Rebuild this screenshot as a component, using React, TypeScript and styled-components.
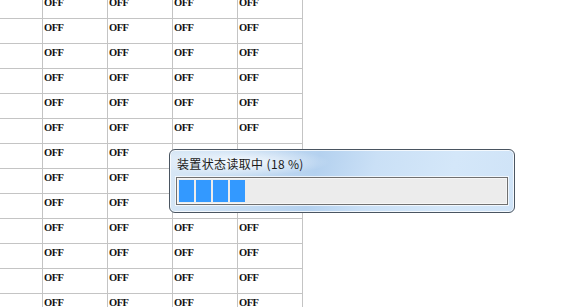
import React from "react";
import styled, { createGlobalStyle } from "styled-components";

const Global = createGlobalStyle`
  html, body { margin: 0; padding: 0; background: #ffffff; overflow: hidden; }
  body { width: 561px; height: 307px; position: relative; }
`;

const Page = styled.div`
  position: relative;
  width: 561px;
  height: 307px;
  overflow: hidden;
  background: #ffffff;
`;

const Grid = styled.div`
  display: grid;
  grid-template-columns: 43px repeat(4, 65px);
  grid-auto-rows: 25px;
  margin-top: -6px;
  width: 303px;
`;

const Cell = styled.div`
  box-sizing: border-box;
  border-right: 1px solid #c4c4c4;
  border-bottom: 1px solid #c4c4c4;
  padding: 3px 0 0 1px;
  font-family: "Liberation Serif", "DejaVu Serif", serif;
  font-size: 10.5px;
  font-weight: bold;
  letter-spacing: -0.5px;
  line-height: 12px;
  color: #111;
  white-space: nowrap;
  overflow: hidden;
`;

const Dialog = styled.div`
  position: absolute;
  left: 169px;
  top: 149px;
  width: 346px;
  height: 64px;
  box-sizing: border-box;
  border: 1px solid #4a5561;
  border-radius: 6px;
  padding: 5px 6px 6px 6px;
  display: flex;
  flex-direction: column;
  background:
    radial-gradient(ellipse 90px 14px at 70px 12px, rgba(255,255,255,0.85), rgba(255,255,255,0) 100%),
    linear-gradient(105deg, #d9e8f6 0%, #c4dbf2 25%, #b4d1ef 42%, #cae0f6 58%, #d4e7f9 80%, #cfe3f7 100%);
  box-shadow: inset 0 0 0 1px rgba(255,255,255,0.75);
`;

const Title = styled.div`
  font-family: "Noto Sans CJK SC", "Noto Sans", sans-serif;
  font-size: 12px;
  letter-spacing: 0.35px;
  line-height: 16px;
  color: #1a1a1a;
  padding-left: 1px;
  padding-top: 1px;
  height: 16px;
`;

const Bar = styled.div`
  margin-top: 5px;
  height: 28px;
  box-sizing: border-box;
  border: 1px solid #707070;
  background: #ececec;
  box-shadow: 0 0 0 1px rgba(255,255,255,0.7), inset 0 0 0 1px #f6f6f6;
  padding: 2px 2px;
  display: flex;
  gap: 2px;
`;

const Block = styled.div`
  width: 15px;
  height: 22px;
  background: #3399ff;
`;

const rows = 13;

export default function App() {
  const cells: React.ReactNode[] = [];
  for (let r = 0; r < rows; r++) {
    cells.push(<Cell key={`${r}-0`} />);
    for (let c = 1; c < 5; c++) {
      cells.push(<Cell key={`${r}-${c}`}>OFF</Cell>);
    }
  }
  return (
    <Page>
      <Global />
      <Grid>{cells}</Grid>
      <Dialog>
        <Title>装置状态读取中 (18 %)</Title>
        <Bar>
          {[0, 1, 2, 3].map((i) => (
            <Block key={i} />
          ))}
        </Bar>
      </Dialog>
    </Page>
  );
}
